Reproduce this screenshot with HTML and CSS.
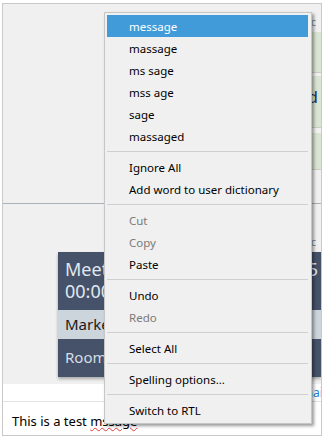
FILE: index.html
```html
<!DOCTYPE html>
<html lang="en">
<head>
    <meta charset="UTF-8">
    <title>Spell check menu</title>
    <link rel="stylesheet" href="styles.css">
</head>
<body>
    <div class="window">
        <div class="history">
            <div class="stamp">Sent 2 sec</div>
            <div class="bubble bubble-short"></div>
            <div class="bubble bubble-tall"><span class="bubble-text">Sounds good</span></div>
            <div class="bubble bubble-last"></div>
        </div>

        <div class="meeting-pane">
            <div class="stamp">Sent 1 sec</div>
            <div class="card">
                <div class="card-head">
                    <div class="card-title"><span>Meeting</span><span>11:45</span></div>
                    <div>00:00</div>
                </div>
                <div class="card-row">Marketing review</div>
                <div class="card-foot">Room 4</div>
            </div>
        </div>

        <div class="compose">
            <div class="compose-bar"><a class="compose-link">Email</a></div>
            <div class="compose-text">This is a test <span class="misspelt">mssage</span></div>
        </div>

        <div class="menu">
            <div class="menu-item active">message</div>
            <div class="menu-item">massage</div>
            <div class="menu-item">ms sage</div>
            <div class="menu-item">mss age</div>
            <div class="menu-item">sage</div>
            <div class="menu-item">massaged</div>
            <div class="separator"></div>
            <div class="menu-item">Ignore All</div>
            <div class="menu-item">Add word to user dictionary</div>
            <div class="separator"></div>
            <div class="menu-item disabled">Cut</div>
            <div class="menu-item disabled">Copy</div>
            <div class="menu-item">Paste</div>
            <div class="separator"></div>
            <div class="menu-item">Undo</div>
            <div class="menu-item disabled">Redo</div>
            <div class="separator"></div>
            <div class="menu-item">Select All</div>
            <div class="separator"></div>
            <div class="menu-item">Spelling options...</div>
            <div class="separator"></div>
            <div class="menu-item">Switch to RTL</div>
        </div>
    </div>
</body>
</html>
```

FILE: styles.css
```css
body {
    margin: 0;
    background: #fff;
    font-family: 'Noto Sans', sans-serif;
    color: #000;
}

.window {
    position: relative;
    margin: 3px 0 0 2px;
    width: 318px;
    height: 431px;
    border: 1px solid #c9c9c9;
    background: #f0f0f0;
    overflow: hidden;
    display: flex;
    flex-direction: column;
}

.history {
    height: 199px;
    border-bottom: 1px solid #a9b2bb;
    display: flex;
    flex-direction: column;
    flex-shrink: 0;
}

.stamp {
    text-align: right;
    font-size: 11px;
    line-height: 14px;
    color: #7b8b9b;
    padding-right: 5px;
}

.history .stamp {
    margin-top: 11px;
    margin-bottom: 3px;
}

.bubble {
    align-self: flex-end;
    width: 200px;
    background: #dae4d2;
    border-bottom: 1px solid #c7cec2;
}

.bubble-short {
    height: 40px;
    margin-bottom: 3px;
}

.bubble-tall {
    height: 51px;
    margin-bottom: 5px;
    display: flex;
    justify-content: flex-end;
    align-items: flex-start;
}

.bubble-text {
    margin-top: 10px;
    padding-right: 3px;
    font-size: 17px;
    line-height: 22px;
    color: #1c3566;
}

.bubble-last {
    height: 36px;
}

.meeting-pane {
    height: 180px;
    flex-shrink: 0;
}

.meeting-pane .stamp {
    margin-top: 31px;
    margin-bottom: 3px;
}

.card {
    margin-left: 55px;
    box-shadow: 0 2px 3px rgba(0, 0, 0, 0.3);
}

.card-head {
    height: 58px;
    background: #46526a;
    color: #e1e8f0;
    font-size: 18px;
    line-height: 22px;
    padding: 6px 3px 0 7px;
    box-sizing: border-box;
}

.card-title {
    display: flex;
    justify-content: space-between;
}

.card-row {
    height: 29px;
    background: #ccd4dc;
    color: #1a1a1a;
    font-size: 15px;
    line-height: 29px;
    padding-left: 7px;
}

.card-foot {
    height: 38px;
    background: #46526a;
    color: #d5dde6;
    font-size: 15px;
    line-height: 36px;
    padding-left: 7px;
}

.compose {
    flex: 1;
    background: #fff;
}

.compose-bar {
    height: 17px;
    border-bottom: 1px solid #e2e2e2;
    display: flex;
    justify-content: flex-end;
}

.compose-link {
    font-size: 12px;
    line-height: 17px;
    color: #1f7fd0;
    margin-right: -5px;
}

.compose-text {
    font-size: 13px;
    line-height: 18px;
    padding: 10px 0 0 9px;
}

.misspelt {
    text-decoration: underline wavy #e23b3b;
    text-decoration-thickness: 1px;
}

.menu {
    position: absolute;
    left: 101px;
    top: 8px;
    width: 201px;
    padding: 2px 3px 2px 2px;
    background: #f0f0f0;
    border: 1px solid #c6c6c6;
    box-shadow: 2px 2px 3px rgba(0, 0, 0, 0.4);
}

.menu-item {
    height: 22px;
    line-height: 24px;
    padding-left: 22px;
    font-size: 11.5px;
    white-space: nowrap;
    overflow: hidden;
}

.menu-item.active {
    background: #419bd9;
    color: #fff;
}

.menu-item.disabled {
    color: #7a7a7a;
}

.separator {
    height: 9px;
    display: flex;
    align-items: center;
}

.separator::after {
    content: '';
    flex: 1;
    height: 1px;
    background: #cfcfcf;
}
```
